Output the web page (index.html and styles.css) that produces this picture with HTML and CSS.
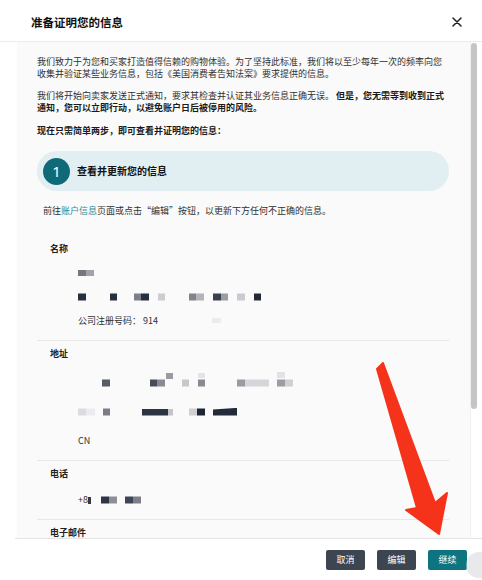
FILE: index.html
```html
<!DOCTYPE html>
<html lang="zh-CN">
<head>
<meta charset="utf-8">
<title>准备证明您的信息</title>
<link rel="stylesheet" href="styles.css">
</head>
<body>
<div class="modal">
  <header class="head">
    <h1 class="title">准备证明您的信息</h1>
    <span class="close"><svg viewBox="0 0 10 10" width="10" height="10"><path d="M1 1L9 9M9 1L1 9" stroke="#1e1e1e" stroke-width="1.5" stroke-linecap="round"/></svg></span>
  </header>
  <div class="body">
    <div class="content">
      <p class="para">我们致力于为您和买家打造值得信赖的购物体验。为了坚持此标准，我们将以至少每年一次的频率向您收集并验证某些业务信息，包括《美国消费者告知法案》要求提供的信息。</p>
      <p class="para para-mixed">我们将开始向卖家发送正式通知，要求其检查并认证其业务信息正确无误。 <strong class="em">但是，您无需等到收到正式</strong><strong class="em">通知，您可以立即行动，以避免账户日后被停用的风险。</strong></p>
      <p class="para lead">现在只需简单两步，即可查看并证明您的信息：</p>
      <div class="step"><span class="num">1</span><span class="step-title">查看并更新您的信息</span></div>
      <p class="hint">前往<a class="link">账户信息</a>页面或点击“编辑”按钮，以更新下方任何不正确的信息。</p>

      <section class="field field-first">
        <div class="label">名称</div>
        <div class="values v-name">
          <div class="row"><svg class="redact" width="20" height="12"><rect x="0" y="3" width="8" height="6" fill="#76767f"/><rect x="8" y="3" width="8" height="6" fill="#a2a2aa"/></svg></div>
          <div class="row"><svg class="redact" width="190" height="12">
            <rect x="0" y="2.5" width="8" height="7" fill="#27303f"/>
            <rect x="32" y="2.5" width="7" height="7" fill="#27303f"/>
            <rect x="56" y="2.5" width="7" height="7" fill="#7e7e88"/>
            <rect x="63" y="2.5" width="8" height="7" fill="#27303f"/>
            <rect x="80" y="2.5" width="7" height="7" fill="#cdcdd1"/>
            <rect x="111" y="2.5" width="7" height="7" fill="#83838c"/>
            <rect x="118" y="2.5" width="8" height="7" fill="#b3b3b9"/>
            <rect x="135" y="2.5" width="8" height="7" fill="#394151"/>
            <rect x="143" y="2.5" width="7" height="7" fill="#9c9ca4"/>
            <rect x="159" y="2.5" width="8" height="7" fill="#cbcbcf"/>
            <rect x="176" y="2.5" width="7" height="7" fill="#222a38"/>
          </svg></div>
          <div class="row">公司注册号码：&nbsp;914<svg class="redact ghost" width="10" height="12"><rect x="0" y="3" width="9" height="5" fill="#ececee"/></svg></div>
        </div>
      </section>

      <section class="field">
        <div class="label">地址</div>
        <div class="values v-addr">
          <div class="row"><svg class="redact" width="220" height="12">
            <rect x="24" y="2.5" width="8" height="7" fill="#555c68"/>
            <rect x="72" y="2.5" width="7" height="7" fill="#454c5a"/>
            <rect x="79" y="2.5" width="8" height="7" fill="#8a8a94"/>
            <rect x="88" y="-4" width="7" height="6" fill="#9a9aa2"/>
            <rect x="104" y="2.5" width="7" height="7" fill="#c8c8cc"/>
            <rect x="120" y="2.5" width="7" height="7" fill="#8a8a92"/>
            <rect x="120" y="-4" width="7" height="5" fill="#e4e4e6"/>
            <rect x="159" y="2.5" width="8" height="7" fill="#9a9aa2"/>
            <rect x="167" y="2.5" width="24" height="7" fill="#d6d6da"/>
            <rect x="199" y="2.5" width="8" height="7" fill="#9c9ca2"/>
            <rect x="207" y="2.5" width="8" height="7" fill="#d0d0d4"/>
            <rect x="199" y="-5" width="8" height="6" fill="#e2e2e4"/>
          </svg></div>
          <div class="row"><svg class="redact" width="165" height="12">
            <rect x="0" y="2.5" width="8" height="7" fill="#dcdce0"/>
            <rect x="8" y="2.5" width="9" height="7" fill="#ececef"/>
            <rect x="25" y="2.5" width="7" height="7" fill="#7c7c86"/>
            <rect x="64" y="3" width="26" height="6.5" fill="#2c3444"/>
            <rect x="90" y="3" width="5" height="6.5" fill="#c4c4c8"/>
            <rect x="111" y="2.5" width="8" height="7" fill="#d0d0d4"/>
            <rect x="119" y="2.5" width="8" height="7" fill="#1e2636"/>
            <path d="M135 3.5 L157 2 L159 2 L159 9.5 L135 9.5 Z" fill="#232b3a"/>
          </svg></div>
          <div class="row">CN</div>
        </div>
      </section>

      <section class="field">
        <div class="label">电话</div>
        <div class="values v-phone">
          <div class="row">+8<svg class="redact" width="56" height="12">
            <rect x="0" y="3" width="3" height="7" fill="#333a46"/>
            <rect x="13" y="2.5" width="8" height="7" fill="#2e3646"/>
            <rect x="21" y="2.5" width="8" height="7" fill="#8e8e98"/>
            <rect x="37" y="2.5" width="8" height="7" fill="#3e4656"/>
            <rect x="45" y="2.5" width="8" height="7" fill="#7e7e88"/>
          </svg></div>
        </div>
      </section>

      <section class="field field-last">
        <div class="label">电子邮件</div>
      </section>
    </div>
    <div class="scroll"><div class="thumb"></div></div>
  </div>
  <footer class="foot">
    <button class="btn">取消</button>
    <button class="btn">编辑</button>
    <button class="btn btn-primary">继续</button>
  </footer>
</div>
<svg class="arrow" viewBox="0 0 482 580" width="482" height="580">
  <path d="M377 369 L383 363 L435 503 L447 493 L439 534 L406 510 L417 508 Z" fill="#f5321a" stroke="#f5321a" stroke-width="2" stroke-linejoin="round"/>
</svg>
<div class="fab"></div>
</body>
</html>
```

FILE: styles.css
```css
* {
  box-sizing: border-box;
  margin: 0;
  padding: 0;
}

html, body {
  width: 482px;
  height: 580px;
  overflow: hidden;
  background: #fff;
}

body {
  position: relative;
  font-family: "Noto Sans CJK SC", "Noto Sans", sans-serif;
  font-size: 9px;
  line-height: 12px;
  color: #303030;
}

.head {
  height: 42px;
  display: flex;
  align-items: center;
  justify-content: space-between;
  padding: 3px 20px 0 31px;
  border-bottom: 1px solid #ececec;
}

.title {
  font-size: 11.5px;
  line-height: 16px;
  font-weight: 700;
  color: #111;
}

.close {
  display: flex;
  width: 10px;
  height: 10px;
}

.body {
  height: 496px;
  margin-left: 17px;
  display: flex;
  overflow: hidden;
  background: #fafafa;
}

.content {
  flex: 1;
  min-width: 0;
  padding: 14px 21px 0 20px;
}

.scroll {
  width: 12px;
  flex: none;
  background: #fff;
  border-left: 1px solid #efefef;
  padding-top: 1px;
}

.thumb {
  width: 6px;
  height: 366px;
  border-radius: 3px;
  background: #c5c5c5;
}

.para-mixed {
  margin-top: 10px;
}

.para.lead {
  margin-top: 11px;
  font-weight: 700;
  color: #1a1a1a;
}

.em {
  font-weight: 700;
  color: #1a1a1a;
}

.step {
  margin-top: 14px;
  height: 40px;
  border-radius: 20px;
  background: #e1eef2;
  display: flex;
  align-items: center;
  gap: 7px;
  padding-left: 6px;
}

.num {
  width: 27px;
  height: 27px;
  border-radius: 50%;
  background: #0f6a78;
  color: #fff;
  display: flex;
  align-items: center;
  justify-content: center;
  font-family: "Noto Sans", sans-serif;
  font-size: 15px;
  line-height: 1;
}

.step-title {
  font-size: 10px;
  font-weight: 700;
  color: #111;
}

.hint {
  margin-top: 14px;
  padding-left: 6px;
}

.link {
  color: #2b8d9c;
}

.field {
  padding: 7px 0 13px 13px;
  border-bottom: 1px solid #e8e8e8;
}

.field-first {
  margin-top: 19px;
}

.field-last {
  border-bottom: 0;
}

.label {
  font-weight: 700;
  color: #222;
}

.values {
  display: flex;
  flex-direction: column;
  padding-left: 28px;
}

.v-name {
  gap: 12px;
  margin-top: 12px;
}

.v-addr {
  gap: 17px;
  margin-top: 17px;
}

.v-phone {
  margin-top: 14px;
}

.row {
  height: 12px;
  display: flex;
  align-items: center;
  white-space: nowrap;
}

.redact {
  display: block;
  overflow: visible;
  flex: none;
}

.ghost {
  margin-left: 54px;
}

.foot {
  height: 42px;
  margin-left: 15px;
  border-top: 1px solid #e4e4e4;
  display: flex;
  justify-content: flex-end;
  align-items: center;
  gap: 12px;
  padding-right: 15px;
  background: #fff;
}

.btn {
  width: 39px;
  height: 20px;
  border: 0;
  border-radius: 2px;
  background: #3c4550;
  color: #fff;
  font-family: "Noto Sans CJK SC", sans-serif;
  font-size: 9px;
  line-height: 20px;
}

.btn-primary {
  background: #0e7480;
}

.arrow {
  position: absolute;
  left: 0;
  top: 0;
  pointer-events: none;
}

.fab {
  position: absolute;
  left: 466px;
  top: 552px;
  width: 26px;
  height: 26px;
  border-radius: 50%;
  background: rgba(215, 215, 220, 0.55);
}
```
